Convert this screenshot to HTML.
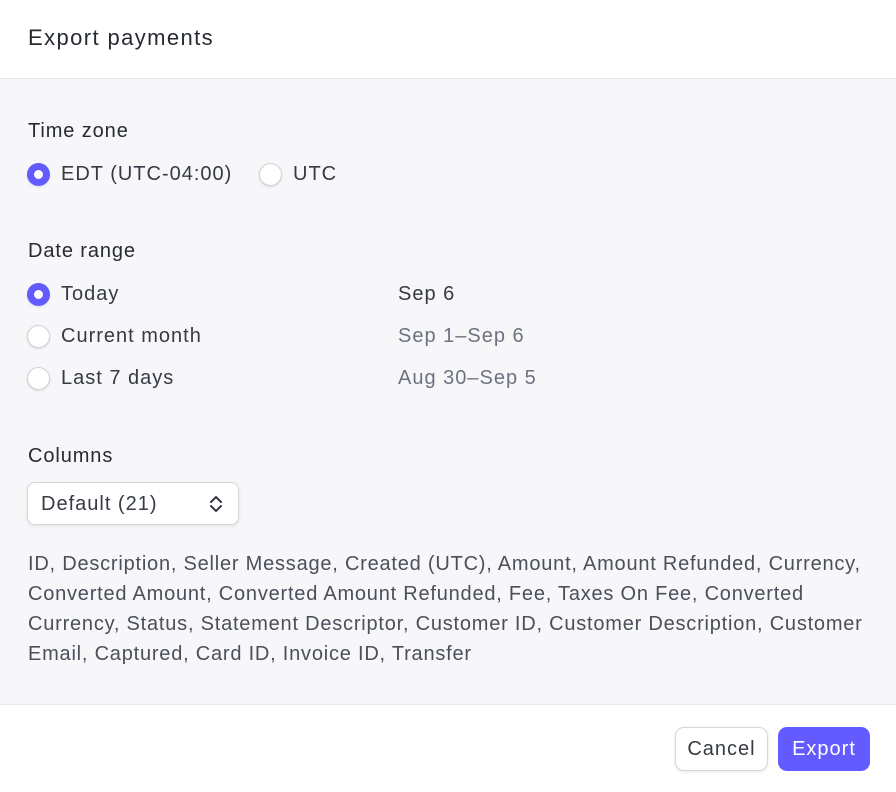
<!DOCTYPE html>
<html><head><style>
*{margin:0;padding:0;box-sizing:border-box}
body{width:896px;height:792px;font-family:"Liberation Sans",sans-serif;color:#353a44;background:#f7f7fa;position:relative;overflow:hidden;font-size:20px;letter-spacing:1px}
.hdr{position:absolute;left:0;top:0;width:896px;height:79px;background:#fff;border-bottom:1px solid #e6e7ec}
.hdr div{position:absolute;left:28px;top:25px;font-size:22px;color:#262a33;letter-spacing:1.4px}
.t{position:absolute;line-height:24px;white-space:nowrap}
.lbl{font-size:20px;color:#262a33;letter-spacing:0.9px}
.r{position:absolute;width:23px;height:23px;border-radius:50%;background:#fff;border:1px solid #d0d2d8;box-shadow:0 1px 2px rgba(0,0,0,.12)}
.r.on{background:#635bff;border-color:#635bff}
.r.on::after{content:"";position:absolute;left:6px;top:6px;width:9px;height:9px;border-radius:50%;background:#fff}
.g{color:#6c7280}
.sel{position:absolute;left:27px;top:482px;width:212px;height:43px;background:#fff;border:1px solid #d5d7dd;border-radius:8px;box-shadow:0 1px 3px rgba(0,0,0,.1)}
.desc{position:absolute;left:28px;top:549px;width:850px;line-height:30px;font-size:20px;color:#4a4f5a;letter-spacing:0.78px}
.ftr{position:absolute;left:0;top:704px;width:896px;height:88px;background:#fff;border-top:1px solid #e6e7ec}
.btn{position:absolute;top:727px;height:44px;border-radius:9px;font-size:20px;line-height:44px;text-align:center}
</style></head><body>
<div class="hdr"><div>Export payments</div></div>
<div class="t lbl" style="left:28px;top:119px">Time zone</div>
<div class="r on" style="left:27px;top:163px"></div>
<div class="t" style="left:61px;top:162px">EDT (UTC-04:00)</div>
<div class="r" style="left:259px;top:163px"></div>
<div class="t" style="left:293px;top:162px">UTC</div>
<div class="t lbl" style="left:28px;top:239px">Date range</div>
<div class="r on" style="left:27px;top:283px"></div>
<div class="t" style="left:61px;top:282px">Today</div>
<div class="t" style="left:398px;top:282px">Sep 6</div>
<div class="r" style="left:27px;top:325px"></div>
<div class="t" style="left:61px;top:324px">Current month</div>
<div class="t g" style="left:398px;top:324px">Sep 1–Sep 6</div>
<div class="r" style="left:27px;top:367px"></div>
<div class="t" style="left:61px;top:366px">Last 7 days</div>
<div class="t g" style="left:398px;top:366px">Aug 30–Sep 5</div>
<div class="t lbl" style="left:28px;top:444px">Columns</div>
<div class="sel"><div class="t" style="left:13px;top:9px">Default (21)</div>
<svg style="position:absolute;left:181px;top:11px" width="14" height="20" viewBox="0 0 14 20"><path d="M2 8L7 3L12 8M2 12L7 17L12 12" fill="none" stroke="#353a44" stroke-width="2" stroke-linecap="round" stroke-linejoin="round"/></svg></div>
<div class="desc">ID, Description, Seller Message, Created (UTC), Amount, Amount Refunded, Currency, Converted Amount, Converted Amount Refunded, Fee, Taxes On Fee, Converted Currency, Status, Statement Descriptor, Customer ID, Customer Description, Customer Email, Captured, Card ID, Invoice ID, Transfer</div>
<div class="ftr"></div>
<div class="btn" style="left:675px;width:93px;background:#fff;border:1px solid #d5d7dd;box-shadow:0 1px 3px rgba(0,0,0,.1);line-height:42px">Cancel</div>
<div class="btn" style="left:778px;width:92px;background:#635bff;color:#fff">Export</div>
</body></html>
